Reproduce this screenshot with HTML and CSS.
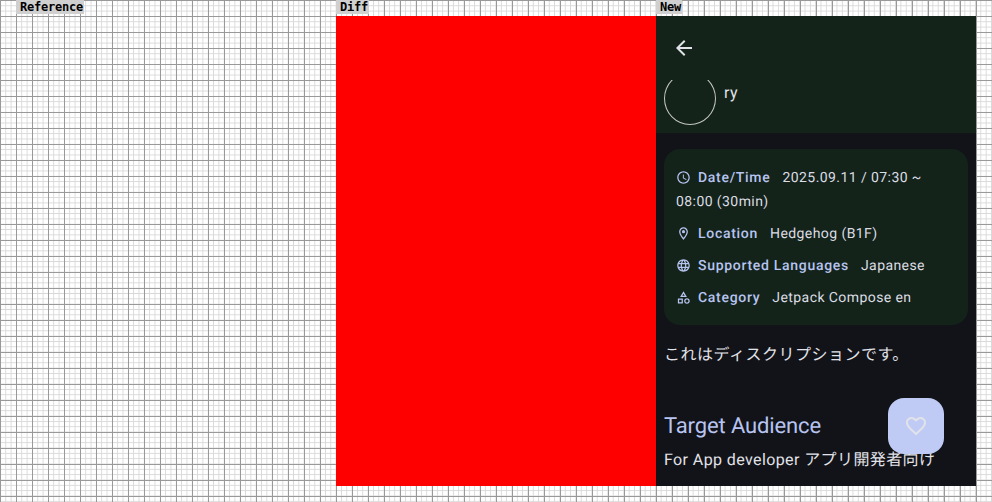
FILE: index.html
```html
<!DOCTYPE html>
<html lang="ja">
<head>
<meta charset="utf-8">
<title>Compare</title>
<link rel="stylesheet" href="styles.css">
</head>
<body>
<div class="compare">
  <section class="column">
    <div class="label">Reference</div>
    <div class="panel"></div>
  </section>
  <section class="column">
    <div class="label">Diff</div>
    <div class="panel panel-diff"></div>
  </section>
  <section class="column">
    <div class="label">New</div>
    <div class="panel panel-new">
      <header class="header">
        <div class="toolbar">
          <svg class="back" viewBox="0 0 24 24"><path d="M20 11H7.83l5.59-5.59L12 4l-8 8 8 8 1.41-1.41L7.83 13H20v-2z"/></svg>
        </div>
        <div class="profile">
          <div class="avatar"></div>
          <div class="name">ry</div>
        </div>
      </header>
      <main class="content">
        <div class="card">
          <p class="row">
            <svg class="icon" viewBox="0 0 24 24"><path d="M11.99 2C6.47 2 2 6.48 2 12s4.47 10 9.99 10C17.52 22 22 17.52 22 12S17.52 2 11.99 2zM12 20c-4.42 0-8-3.58-8-8s3.58-8 8-8 8 3.58 8 8-3.58 8-8 8zm.5-13H11v6l5.25 3.15.75-1.23-4.5-2.67z"/></svg><span class="key">Date/Time</span> <span class="value">2025.09.11 / 07:30 ~ 08:00 (30min)</span>
          </p>
          <p class="row">
            <svg class="icon" viewBox="0 0 24 24"><path d="M12 2C8.13 2 5 5.13 5 9c0 5.25 7 13 7 13s7-7.75 7-13c0-3.87-3.13-7-7-7zM7 9c0-2.76 2.24-5 5-5s5 2.24 5 5c0 2.88-2.88 7.19-5 9.88C9.92 16.21 7 11.85 7 9z"/><circle cx="12" cy="9" r="2.5"/></svg><span class="key">Location</span> <span class="value">Hedgehog (B1F)</span>
          </p>
          <p class="row">
            <svg class="icon" viewBox="0 0 24 24"><path d="M11.99 2C6.47 2 2 6.48 2 12s4.47 10 9.99 10C17.52 22 22 17.52 22 12S17.52 2 11.99 2zm6.93 6h-2.95c-.32-1.25-.78-2.45-1.38-3.56 1.84.63 3.37 1.91 4.33 3.56zM12 4.04c.83 1.2 1.48 2.53 1.91 3.96h-3.82c.43-1.43 1.08-2.76 1.91-3.96zM4.26 14C4.1 13.36 4 12.69 4 12s.1-1.36.26-2h3.38c-.08.66-.14 1.32-.14 2s.06 1.34.14 2H4.26zm.82 2h2.95c.32 1.25.78 2.45 1.38 3.56-1.84-.63-3.37-1.9-4.33-3.56zm2.95-8H5.08c.96-1.66 2.49-2.93 4.33-3.56C8.81 5.55 8.35 6.75 8.03 8zM12 19.96c-.83-1.2-1.48-2.53-1.91-3.96h3.82c-.43 1.43-1.08 2.76-1.91 3.96zM14.34 14H9.66c-.09-.66-.16-1.32-.16-2s.07-1.35.16-2h4.68c.09.65.16 1.32.16 2s-.07 1.34-.16 2zm.25 5.56c.6-1.11 1.06-2.31 1.38-3.56h2.95c-.96 1.65-2.49 2.93-4.33 3.56zM16.36 14c.08-.66.14-1.32.14-2s-.06-1.34-.14-2h3.38c.16.64.26 1.31.26 2s-.1 1.36-.26 2h-3.38z"/></svg><span class="key">Supported Languages</span> <span class="value">Japanese</span>
          </p>
          <p class="row">
            <svg class="icon" viewBox="0 0 24 24"><path d="M12 2l-5.5 9h11L12 2zm0 3.84L13.93 9h-3.87L12 5.84zM17.5 13c-2.49 0-4.5 2.01-4.5 4.5s2.01 4.5 4.5 4.5 4.5-2.01 4.5-4.5-2.01-4.5-4.5-4.5zm0 7c-1.38 0-2.5-1.12-2.5-2.5s1.12-2.5 2.5-2.5 2.5 1.12 2.5 2.5-1.12 2.5-2.5 2.5zM3 21.5h8v-8H3v8zm2-6h4v4H5v-4z"/></svg><span class="key">Category</span> <span class="value">Jetpack Compose en</span>
          </p>
        </div>
        <p class="description">これはディスクリプションです。</p>
        <h2 class="section-title">Target Audience</h2>
        <p class="section-body">For App developer アプリ開発者向け</p>
      </main>
      <button class="fab" type="button" aria-label="Favorite">
        <svg class="fab-icon" viewBox="0 0 24 24"><path d="M16.5 3c-1.74 0-3.41.81-4.5 2.09C10.91 3.81 9.24 3 7.5 3 4.42 3 2 5.42 2 8.5c0 3.78 3.4 6.86 8.55 11.54L12 21.35l1.45-1.32C18.6 15.36 22 12.28 22 8.5 22 5.42 19.58 3 16.5 3zm-4.4 15.55l-.1.1-.1-.1C7.14 14.24 4 11.39 4 8.5 4 6.5 5.5 5 7.5 5c1.54 0 3.04.99 3.57 2.36h1.87C13.46 5.99 14.96 5 16.5 5c2 0 3.5 1.5 3.5 3.5 0 2.89-3.14 5.74-7.9 10.05z"/></svg>
      </button>
    </div>
  </section>
</div>
</body>
</html>
```

FILE: styles.css
```css
* { box-sizing: border-box; }

html, body {
  margin: 0;
  height: 100%;
  overflow: hidden;
}

body {
  background-color: #fff;
  background-image:
    linear-gradient(#999 1px, transparent 1px),
    linear-gradient(90deg, #999 1px, transparent 1px),
    linear-gradient(#d8d8d8 1px, transparent 1px),
    linear-gradient(90deg, #d8d8d8 1px, transparent 1px);
  background-size: 16px 16px, 16px 16px, 5.3333px 5.3333px, 5.3333px 5.3333px;
}

.compare {
  display: flex;
  padding-left: 16px;
}

.column {
  width: 320px;
  flex: none;
}

.label {
  width: fit-content;
  height: 16px;
  padding: 0 1px 0 4px;
  background: linear-gradient(#d0d0d0 14px, transparent 14px);
  color: #000;
  font: bold 12px/15px "DejaVu Sans Mono", monospace;
  letter-spacing: -0.22px;
}

.panel {
  height: 470px;
}

.panel-diff {
  background: #f00;
}

.panel-new {
  position: relative;
  overflow: hidden;
  background: #111318;
  color: #e2e2e9;
  font-family: Roboto, "Noto Sans CJK JP", sans-serif;
  text-rendering: geometricPrecision;
}

.header {
  height: 117px;
  background: #13231a;
}

.toolbar {
  position: relative;
  z-index: 1;
  height: 64px;
  padding: 20px 16px;
  background: #13231a;
}

.back {
  display: block;
  width: 24px;
  height: 24px;
  fill: #e2e2e9;
}

.profile {
  display: flex;
  gap: 8px;
  padding-left: 8px;
}

.avatar {
  width: 52px;
  height: 53px;
  margin-top: -8px;
  border: 1px solid #c4c8c0;
  border-radius: 50%;
  flex: none;
}

.name {
  padding-top: 1px;
  font-size: 16px;
  line-height: 24px;
  letter-spacing: 0.5px;
}

.content {
  padding: 16px 8px 0;
}

.card {
  display: flex;
  flex-direction: column;
  gap: 8px;
  padding: 17px 12px 15px;
  border-radius: 16px;
  background: #13231a;
}

.row {
  margin: 0;
  font-size: 14px;
  line-height: 24px;
  color: #dcdce3;
}

.icon {
  width: 15px;
  height: 15px;
  margin-right: 7px;
  vertical-align: -3px;
  fill: #b8c4f0;
}

.key {
  font-weight: 500;
  color: #b8c4f0;
  letter-spacing: 0.7px;
}

.value {
  margin-left: 8.6px;
  letter-spacing: 0.42px;
}

.description {
  margin: 18px 0 0;
  font-size: 16px;
  line-height: 24px;
  letter-spacing: 0.5px;
}

.section-title {
  margin: 46px 0 0;
  font-size: 22px;
  font-weight: 400;
  line-height: 28px;
  letter-spacing: -0.13px;
  color: #b8c4f0;
}

.section-body {
  margin: 7px 0 0;
  font-size: 16px;
  line-height: 24px;
  letter-spacing: 0.4px;
}

.fab {
  position: absolute;
  left: 232px;
  top: 382px;
  display: flex;
  align-items: center;
  justify-content: center;
  width: 56px;
  height: 56px;
  padding: 0;
  border: 0;
  border-radius: 16px;
  background: #bfcbf5;
}

.fab-icon {
  width: 24px;
  height: 24px;
  fill: #e2e2e9;
}
```
